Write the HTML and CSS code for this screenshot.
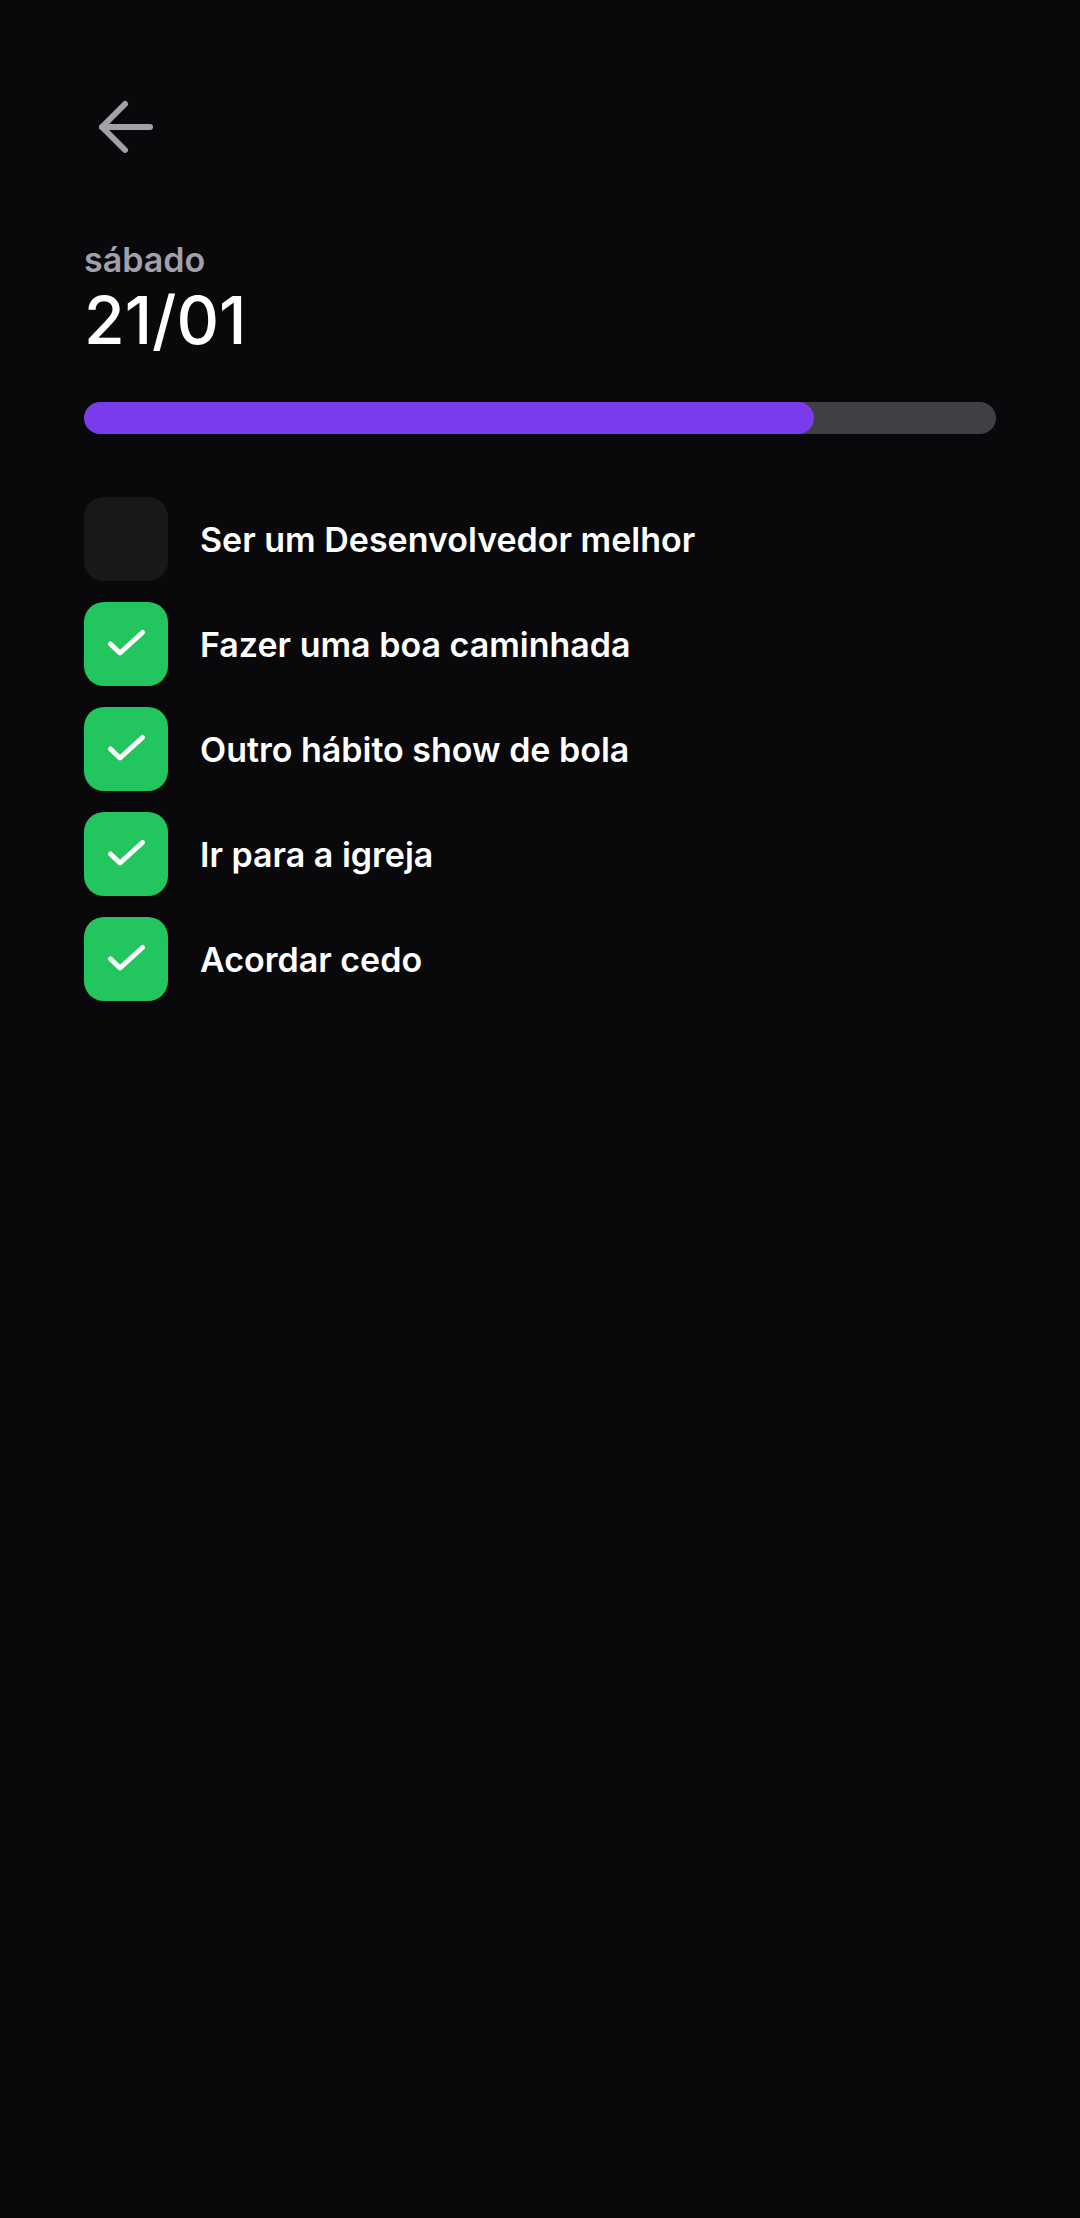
FILE: index.html
```html
<!DOCTYPE html>
<html lang="pt-BR">
<head>
<meta charset="utf-8">
<title>Hábitos</title>
<link rel="stylesheet" href="styles.css">
</head>
<body>
<main class="screen">
  <button class="back" aria-label="Voltar">
    <svg width="72" height="72" viewBox="0 0 72 72" fill="none" stroke="#a1a1aa" stroke-width="6" stroke-linecap="round" stroke-linejoin="round">
      <path d="M66 36H18"/>
      <path d="M41 13L18 36L41 59"/>
    </svg>
  </button>
  <p class="weekday">sábado</p>
  <h1 class="date">21/01</h1>
  <div class="progress"><div class="progress-fill" style="width:80%"></div></div>
  <ul class="habits">
    <li class="habit"><span class="box"></span><span class="title">Ser um Desenvolvedor melhor</span></li>
    <li class="habit"><span class="box checked"><svg width="84" height="84" viewBox="0 0 84 84" fill="none" stroke="#fff" stroke-width="5" stroke-linecap="round" stroke-linejoin="round"><path d="M26.5 42L36 51L58.5 30.5"/></svg></span><span class="title">Fazer uma boa caminhada</span></li>
    <li class="habit"><span class="box checked"><svg width="84" height="84" viewBox="0 0 84 84" fill="none" stroke="#fff" stroke-width="5" stroke-linecap="round" stroke-linejoin="round"><path d="M26.5 42L36 51L58.5 30.5"/></svg></span><span class="title">Outro hábito show de bola</span></li>
    <li class="habit"><span class="box checked"><svg width="84" height="84" viewBox="0 0 84 84" fill="none" stroke="#fff" stroke-width="5" stroke-linecap="round" stroke-linejoin="round"><path d="M26.5 42L36 51L58.5 30.5"/></svg></span><span class="title">Ir para a igreja</span></li>
    <li class="habit"><span class="box checked"><svg width="84" height="84" viewBox="0 0 84 84" fill="none" stroke="#fff" stroke-width="5" stroke-linecap="round" stroke-linejoin="round"><path d="M26.5 42L36 51L58.5 30.5"/></svg></span><span class="title">Acordar cedo</span></li>
  </ul>
</main>
</body>
</html>
```

FILE: styles.css
```css
* { box-sizing: border-box; }
html, body {
  margin: 0;
  padding: 0;
  background: #09090b;
  height: 100%;
}
body {
  font-family: Inter, "Noto Sans", sans-serif;
  color: #ffffff;
}
.screen {
  padding: 91px 84px 0;
  min-height: 2218px;
  background: #09090b;
}
.back {
  display: block;
  padding: 0;
  margin: 0;
  border: 0;
  background: none;
  width: 72px;
  height: 72px;
}
.back svg { display: block; }
.weekday {
  margin: 76.6px 0 0;
  font-size: 34px;
  line-height: 40px;
  font-weight: 600;
  color: #a1a1aa;
}
.date {
  margin: 2px 0 0;
  font-size: 66px;
  line-height: 76px;
  font-weight: 500;
  color: #ffffff;
}
.progress {
  margin-top: 44px;
  height: 32px;
  border-radius: 16px;
  background: #3f3f46;
  overflow: hidden;
}
.progress-fill {
  height: 100%;
  border-radius: 16px;
  background: #7c3aed;
}
.habits {
  list-style: none;
  margin: 63px 0 0;
  padding: 0;
  display: flex;
  flex-direction: column;
  gap: 21px;
}
.habit {
  display: flex;
  align-items: center;
  gap: 32px;
  height: 84px;
}
.box {
  flex: none;
  width: 84px;
  height: 84px;
  border-radius: 20px;
  background: #18181b;
}
.box svg { display: block; }
.box.checked { background: #22c55e; }
.title {
  font-size: 34px;
  font-weight: 600;
  line-height: 42px;
  padding-top: 2px;
  color: #ffffff;
}
```
